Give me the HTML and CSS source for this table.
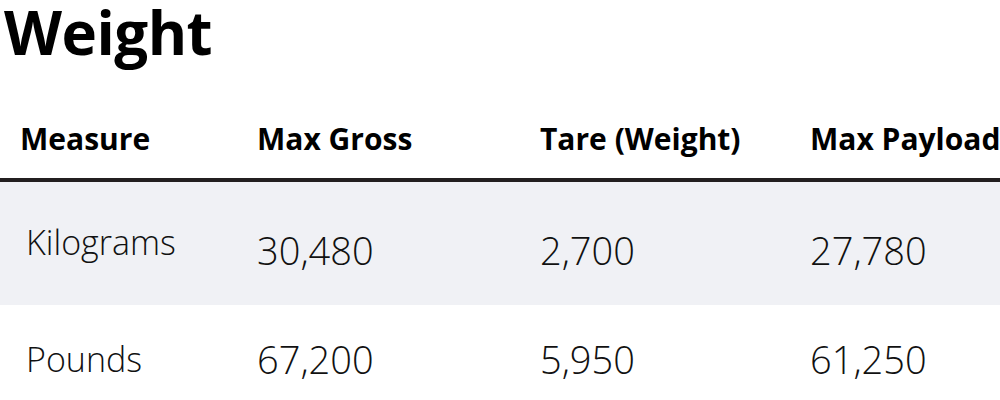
FILE: index.html
```html
<!DOCTYPE html>
<html lang="en">
<head>
<meta charset="utf-8">
<title>Weight</title>
<link rel="stylesheet" href="styles.css">
</head>
<body>
<div class="page">
  <h1 class="title">Weight</h1>
  <div class="table-wrap">
    <table class="spec">
      <colgroup>
        <col class="c1"><col class="c2"><col class="c3"><col class="c4">
      </colgroup>
      <thead>
        <tr>
          <th>Measure</th>
          <th>Max Gross</th>
          <th>Tare (Weight)</th>
          <th>Max Payload</th>
        </tr>
      </thead>
      <tbody>
        <tr class="row-a">
          <td class="label">Kilograms</td>
          <td class="num">30,480</td>
          <td class="num">2,700</td>
          <td class="num">27,780</td>
        </tr>
        <tr class="row-b">
          <td class="label">Pounds</td>
          <td class="num">67,200</td>
          <td class="num">5,950</td>
          <td class="num">61,250</td>
        </tr>
      </tbody>
    </table>
  </div>
</div>
</body>
</html>
```

FILE: styles.css
```css
html, body {
  margin: 0;
  padding: 0;
  background: #ffffff;
}

body {
  font-family: "Open Sans", "DejaVu Sans", sans-serif;
  color: #111111;
  overflow: hidden;
}

.page {
  width: 1000px;
  height: 400px;
  overflow: hidden;
}

.title {
  margin: 0;
  padding: 0 0 8px 4px;
  font-size: 60px;
  font-weight: 700;
  line-height: 64px;
  letter-spacing: -0.5px;
  color: #000000;
}

.table-wrap {
  width: 1000px;
  overflow: hidden;
}

.spec {
  width: 1100px;
  table-layout: fixed;
  border-collapse: collapse;
}

.spec col.c1 { width: 237px; }
.spec col.c2 { width: 283px; }
.spec col.c3 { width: 270px; }
.spec col.c4 { width: 310px; }

.spec th {
  height: 108px;
  box-sizing: border-box;
  padding: 0 0 20px 20px;
  vertical-align: bottom;
  text-align: left;
  font-size: 30px;
  font-weight: 700;
  line-height: 38px;
  white-space: nowrap;
  color: #000000;
  border-bottom: 4px solid #231f20;
}

.spec td {
  padding: 0 0 0 20px;
  vertical-align: top;
  text-align: left;
  white-space: nowrap;
  font-weight: 300;
  color: #111111;
}

.spec td.label {
  padding-left: 26px;
  font-size: 34px;
  line-height: 40px;
}

.spec td.num {
  font-size: 38px;
  line-height: 48px;
}

.row-a {
  height: 125px;
  background: #f0f1f5;
}

.row-a td.label { padding-top: 40px; }
.row-a td.num { padding-top: 44px; }

.row-b {
  height: 123px;
}

.row-b td.label { padding-top: 34px; }
.row-b td.num { padding-top: 30px; }
```
